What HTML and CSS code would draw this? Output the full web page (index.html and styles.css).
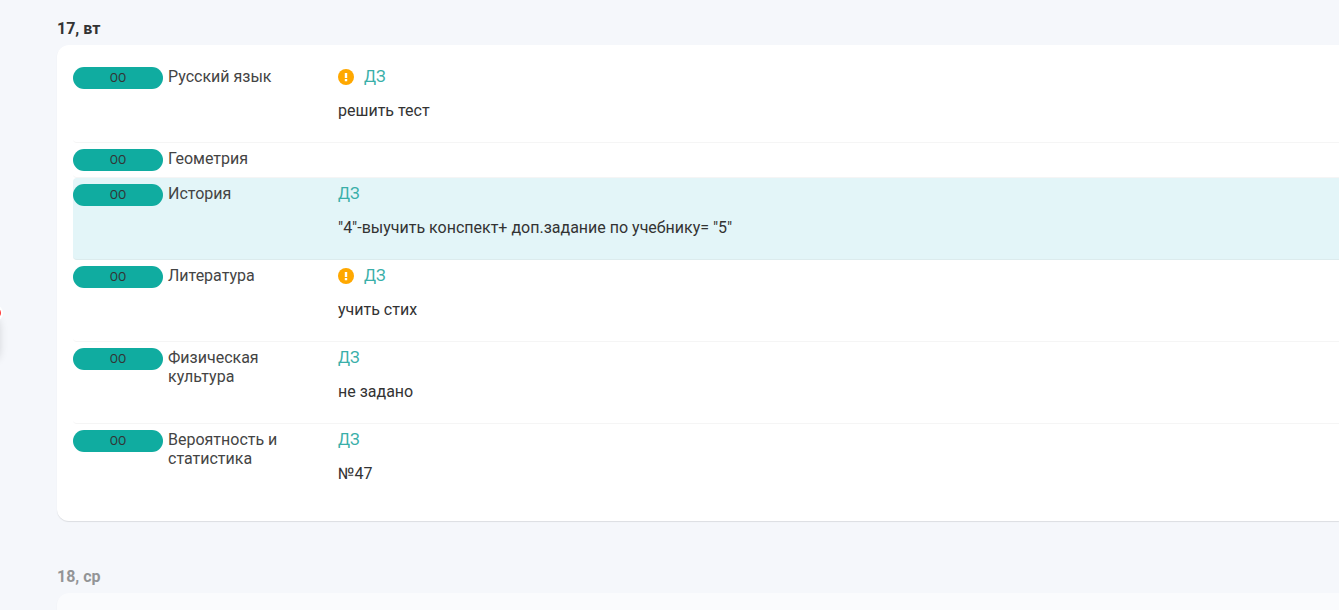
FILE: index.html
```
<!DOCTYPE html>
<html lang="ru">
<head>
<meta charset="utf-8">
<title>Дневник</title>
<link rel="stylesheet" href="styles.css">
</head>
<body>
<button class="drawer" type="button" aria-label="Открыть меню"><span class="drawer-badge"></span></button>
<main class="diary">
  <section class="day">
    <h2 class="day-title">17, вт</h2>
    <div class="card">
      <article class="lesson">
        <span class="time">ОО</span>
        <h3 class="subject">Русский язык</h3>
        <div class="homework">
          <div class="homework-head">
            <svg class="alert" viewBox="0 0 16 16" aria-hidden="true"><circle cx="8" cy="8" r="8" fill="#ffa800"/><path d="M6.8 4h2.4v5H6.8zM6.8 10h2.4v2.2H6.8z" fill="#fff"/></svg>
            <a class="homework-link" href="#">ДЗ</a>
          </div>
          <p class="task">решить тест</p>
        </div>
      </article>
      <article class="lesson">
        <span class="time">ОО</span>
        <h3 class="subject">Геометрия</h3>
      </article>
      <article class="lesson lesson-current">
        <span class="time">ОО</span>
        <h3 class="subject">История</h3>
        <div class="homework">
          <div class="homework-head"><a class="homework-link" href="#">ДЗ</a></div>
          <p class="task">"4"-выучить конспект+ доп.задание по учебнику= "5"</p>
        </div>
      </article>
      <article class="lesson">
        <span class="time">ОО</span>
        <h3 class="subject">Литература</h3>
        <div class="homework">
          <div class="homework-head">
            <svg class="alert" viewBox="0 0 16 16" aria-hidden="true"><circle cx="8" cy="8" r="8" fill="#ffa800"/><path d="M6.8 4h2.4v5H6.8zM6.8 10h2.4v2.2H6.8z" fill="#fff"/></svg>
            <a class="homework-link" href="#">ДЗ</a>
          </div>
          <p class="task">учить стих</p>
        </div>
      </article>
      <article class="lesson">
        <span class="time">ОО</span>
        <h3 class="subject">Физическая культура</h3>
        <div class="homework">
          <div class="homework-head"><a class="homework-link" href="#">ДЗ</a></div>
          <p class="task">не задано</p>
        </div>
      </article>
      <article class="lesson">
        <span class="time">ОО</span>
        <h3 class="subject">Вероятность и статистика</h3>
        <div class="homework">
          <div class="homework-head"><a class="homework-link" href="#">ДЗ</a></div>
          <p class="task">№47</p>
        </div>
      </article>
    </div>
  </section>
  <section class="day day-muted">
    <h2 class="day-title">18, ср</h2>
    <div class="card"></div>
  </section>
</main>
</body>
</html>
```
FILE: styles.css
```
* {
  box-sizing: border-box;
}

body {
  margin: 0;
  background: #f5f7fb;
  color: #333;
  font: 400 16px/20px Roboto, "Noto Sans", sans-serif;
}

.diary {
  display: flex;
  flex-direction: column;
  gap: 46px;
  height: 100vh;
  overflow: hidden;
  padding: 19px 0 0 57px;
}

.day {
  flex-shrink: 0;
}

.day-title {
  margin: 0 0 6px;
  font-size: 16px;
  font-weight: 700;
  line-height: 20px;
}

.card {
  min-height: 32px;
  padding: 16px 0 16px 16px;
  background: #fff;
  border-radius: 12px 0 0 12px;
  box-shadow: 0 1px 1px rgba(0, 0, 0, 0.1);
}

.day-muted {
  opacity: 0.5;
}

.lesson {
  display: grid;
  grid-template-columns: 90px 165px 1fr;
  column-gap: 5px;
  align-items: start;
  padding: 6px 0;
  border-bottom: 1px solid #f5f5f5;
  border-radius: 4px 0 0 4px;
}

.lesson:last-child {
  border-bottom: 0;
}

.lesson-current {
  background: #e3f5f8;
  border-bottom-color: #dcebed;
}

.time {
  height: 22px;
  border-radius: 11px;
  background: #10aca0;
  color: #333;
  font-size: 12px;
  line-height: 22px;
  text-align: center;
}

.subject {
  max-width: 125px;
  margin: 0;
  color: #444;
  font-size: 16px;
  font-weight: 400;
  line-height: 19px;
}

.homework {
  padding-bottom: 15px;
}

.homework-head {
  display: flex;
  align-items: center;
  gap: 10px;
  height: 20px;
}

.alert {
  width: 16px;
  height: 16px;
}

.homework-link {
  color: #3aafa9;
  text-decoration: none;
}

.task {
  margin: 14px 0 0;
}

.drawer {
  position: fixed;
  top: 316px;
  left: -49px;
  width: 48px;
  height: 42px;
  padding: 0;
  border: 0;
  border-radius: 8px;
  background: #fff;
  box-shadow: 0 2px 10px rgba(0, 0, 0, 0.16);
}

.drawer-badge {
  position: absolute;
  top: -11px;
  right: -4px;
  width: 16px;
  height: 16px;
  border: 2px solid #fff;
  border-radius: 50%;
  background: #f33;
}
```
